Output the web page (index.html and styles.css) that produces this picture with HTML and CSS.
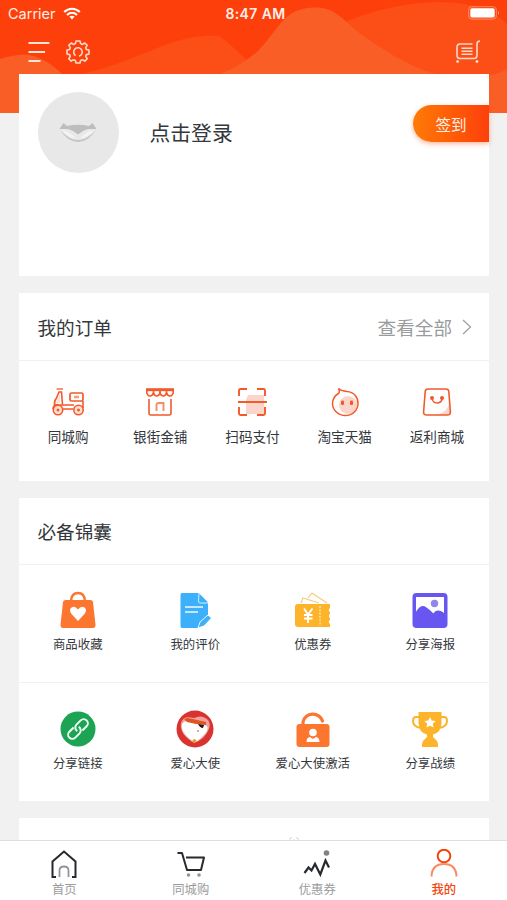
FILE: index.html
```html
<!DOCTYPE html>
<html lang="zh-CN">
<head>
<meta charset="utf-8">
<title>我的</title>
<link rel="stylesheet" href="styles.css">
</head>
<body>
<div class="app">
  <svg class="waves" viewBox="0 0 507 113" aria-hidden="true">
    <rect width="507" height="113" fill="#fd400b"/>
    <path d="M68 76C105 72 145 52 168 44C188 37 203 35 218 36C226 39 236 51 247 60L270 80H68Z" fill="#fc4f18"/>
    <path d="M340 24C385 5 425 0 456 3C484 6 499 15 507 25V80H340Z" fill="#fc4f18"/>
    <path d="M0 59C10 56 20 54 29 55C43 58 53 65 64 76V113H0Z" fill="#fa5e27"/>
    <path d="M222 73C238 67 247 60 257 52C271 38 277 25 288 16C299 7 319 5 332 11C343 17 350 26 362 35C383 50 408 66 435 74V80H222Z" fill="#fa5e27"/>
    <path d="M480 76C492 76 500 73 507 69V113H480Z" fill="#fa5e27"/>
  </svg>

  <header class="status">
    <div class="carrier"><span>Carrier</span>
      <svg width="18" height="13" viewBox="0 0 18 13"><g fill="none" stroke="#fff" stroke-width="2.1"><path d="M1.2 5.1C5.8.6 12.2.6 16.8 5.1"/><path d="M4 8C7 5.2 11 5.2 14 8"/></g><path d="M6.4 9.6Q9 7.7 11.6 9.6L9 12.4Z" fill="#fff"/></svg>
    </div>
    <b>8:47 AM</b>
    <svg class="battery" width="32" height="14" viewBox="0 0 32 14"><rect x=".7" y=".7" width="27.6" height="12.4" rx="3" fill="none" stroke="#ff8a66"/><rect x="2.3" y="2.3" width="24.4" height="9.2" rx="1.7" fill="#fff"/><path d="M30 5Q32 7 30 9Z" fill="#ffa080"/></svg>
  </header>

  <nav class="tools">
    <svg width="22" height="22" viewBox="0 0 22 22" stroke="#ffe5d8" stroke-width="2"><path d="M.5 2H21.500M.5 11H17M.5 20H12.500"/></svg>
    <svg width="24" height="24" viewBox="0 0 24 24" fill="none" stroke="#ffd9c8" stroke-width="1.6" stroke-linejoin="round"><path d="M10 1H14L14.600 3.600L16.500 4.400L18.800 3L21.200 5.300L19.700 7.700L20.400 9.500L23 10V14L20.400 14.600L19.700 16.400L21.200 18.700L18.800 21.100L16.500 19.700L14.600 20.500L14 23H10L9.400 20.500L7.500 19.700L5.200 21.100L2.800 18.700L4.300 16.400L3.600 14.600L1 14V10L3.600 9.500L4.300 7.700L2.800 5.300L5.200 3L7.500 4.400L9.400 3.600Z"/><path d="M9.600 15.600A4.300 4.300 0 1 1 13 16.200"/></svg>
    <svg class="cart" width="26" height="24" viewBox="0 0 26 24" fill="none" stroke="#ffd9c8" stroke-width="1.6"><path d="M25 1Q22 1.200 22 4V15Q22 18.500 19 18.500H5Q2 18.500 2 15V7.500Q2 4 5 4H17.500M6.500 8.200H17.500M6.500 11.200H17.500M6.500 14.200H17.500"/><circle cx="2.600" cy="21.500" r="1.100" fill="#ffe5d8" stroke-width=".8"/><circle cx="22" cy="21.500" r="1.100" fill="#ffe5d8" stroke-width=".8"/></svg>
  </nav>

  <main class="cards">
    <section class="card profile">
      <div class="avatar"><svg width="40" height="22" viewBox="0 0 40 22"><path d="M1.500 7L5.500 1L9 4Q20 1.500 31 4L34.500 1L38.500 7L30 7L25 9L20 12.500L15 9L10 7Z" fill="#bdbdbd"/><path d="M2 8Q10 20 20 20Q30 20 38 8Q29 18 20 18Q11 18 2 8Z" fill="#c4c4c4"/><path d="M4 8Q13 10 18 16.500Q9 15 4 8ZM36 8Q27 10 22 16.500Q31 15 36 8Z" fill="#f3f3f3"/></svg></div>
      <div class="login">点击登录</div>
      <div class="checkin">签到</div>
    </section>

    <section class="card">
      <div class="head"><h2>我的订单</h2><div class="more">查看全部<svg width="10" height="16" viewBox="0 0 10 16" fill="none" stroke="#a0a2a5" stroke-width="1.300"><path d="M1 1L8.500 8L1 15"/></svg></div></div>
      <div class="orders">
        <div class="item"><svg viewBox="0 0 32 30" width="32" height="30" fill="none" stroke="#f25a2b" stroke-width="1.600"><path d="M4.500 2H11" stroke-width="1.300"/><path d="M7 5H9.500L10.500 18H2.500Q2 14 4.500 11Z"/><path d="M3.500 16L8 7V16Z" fill="#fde0d4" stroke="none"/><rect x="18" y="6" width="13" height="8" rx="1.500" stroke-width="1.700"/><path d="M22 10H27" stroke="#f79d7d" stroke-width="2.600"/><path d="M31 14V21M11 18H22M11 22H21M1 22Q1 18 6 17.500"/><g fill="#fde0d4"><circle cx="6" cy="23" r="4.700"/><circle cx="26.500" cy="23" r="4.700"/></g><g fill="#f25a2b" stroke="none"><circle cx="6" cy="23" r="1.500"/><circle cx="26.500" cy="23" r="1.500"/></g></svg><span>同城购</span></div>
        <div class="item"><svg viewBox="0 0 32 30" width="32" height="30" fill="none" stroke="#f25a2b" stroke-width="1.600"><path d="M2.800 2H29.200V6Q28 9 26 9Q23.500 9 22.500 6Q21.500 9 19.300 9Q17 9 16 6Q15 9 12.700 9Q10.500 9 9.500 6Q8.500 9 6 9Q4 9 2.800 6Z"/><path d="M3 3H29" stroke-width="2.400"/><path d="M9.500 3V7M16 3V7M22.500 3V7"/><path d="M5 12V26Q5 28 7 28H25Q27 28 27 26V12"/><path d="M12.500 24V18Q12.500 16 14.500 16H19.500V24" stroke="#f58c69" stroke-width="1.900"/></svg><span>银街金铺</span></div>
        <div class="item"><svg viewBox="0 0 32 30" width="32" height="30" fill="none" stroke="#f25a2b" stroke-width="1.900"><path d="M12 8H28V27H10V13Z" fill="#fbd5c9" stroke="none"/><path d="M3 9V3.500Q3 2 4.500 2H11M21 2H27.500Q29 2 29 3.500V9M3 20V26.500Q3 28 4.500 28H11M21 28H27.500Q29 28 29 26.500V20M2 15H31"/></svg><span>扫码支付</span></div>
        <div class="item"><svg viewBox="0 0 32 30" width="32" height="30"><circle cx="19" cy="18" r="9" fill="#fbd5c9"/><path d="M9.500 1.500C11 3 14 4 18 4.500C25 5 29 10 29 16.500C29 23 23.500 28.500 16.500 28.500S3.500 23 3.500 16.500C3.500 12 6 8.500 10 6Q11 4 9.500 1.500Z" fill="none" stroke="#f25a2b" stroke-width="1.500"/><rect x="12" y="13.500" width="3" height="4.500" rx="1.300" fill="#f0562c"/><rect x="21" y="13.500" width="3" height="4.500" rx="1.300" fill="#f0562c"/></svg><span>淘宝天猫</span></div>
        <div class="item"><svg viewBox="0 0 32 30" width="32" height="30"><path d="M28 17Q26 25 16 28H26Q29 28 29 25Z" fill="#fbd5c9"/><path d="M7 2H25Q27.500 2 27.800 4.500L29.400 25Q29.500 28 26.500 28H5.500Q2.500 28 2.600 25L4.200 4.500Q4.500 2 7 2Z" fill="none" stroke="#f25a2b" stroke-width="1.600"/><path d="M11 11Q11.500 16 16 16T21.500 11" fill="none" stroke="#f25a2b" stroke-width="1.400"/><circle cx="11" cy="11" r="2" fill="#f0562c"/><circle cx="21" cy="11" r="2" fill="#f0562c"/></svg><span>返利商城</span></div>
      </div>
    </section>

    <section class="card">
      <div class="head kit-head"><h2>必备锦囊</h2></div>
      <div class="kit">
        <div class="item"><svg viewBox="0 0 38 38" width="38" height="38"><path d="M12 10Q12.500 2 19 2T26 10" fill="none" stroke="#fc7630" stroke-width="2.400"/><path d="M6.500 9H31.500Q33.500 9 34 11L36.500 34Q36.500 37 34 37H4Q1.500 37 1.500 34L4 11Q4.500 9 6.500 9Z" fill="#fc7630"/><path d="M19 30L12.500 23Q9.500 19 12.500 16.500Q16 14.500 19 18.500Q22 14.500 25.500 16.500Q28.500 19 25.500 23Z" fill="#fff"/></svg><span>商品收藏</span></div>
        <div class="item"><svg viewBox="0 0 38 38" width="38" height="38"><path d="M6 2H23L32 11V25L22 37H6Q4.500 37 4.500 35V4Q4.500 2 6 2Z" fill="#3cb0fb"/><path d="M23 2L32 11V12H24Q22.500 12 22.500 10Z" fill="#3cb0fb" stroke="#d5efff" stroke-width="1"/><path d="M9 16H27M9 21H22" stroke="#eef9ff" stroke-width="1.500"/><path d="M22 37L24 31L32 24L35.500 27L28 35Z" fill="#3cb0fb" stroke="#fff" stroke-width=".9"/></svg><span>我的评价</span></div>
        <div class="item"><svg viewBox="0 0 38 38" width="38" height="38"><g fill="none" stroke="#f9ca77" stroke-width="1.200"><path d="M7 12L9 7L25 12M14 7L18 2L33 12"/></g><path d="M4 13H36V17Q33.500 19 36 21V23Q33.500 25 36 27V29Q33.500 31 36 33V36H4Q1 36 1 33V16Q1 13 4 13Z" fill="#fdb32a"/><path d="M26 15V34" stroke="#ffe1a7" stroke-width="1.500" stroke-dasharray="2 1.300"/><path d="M10 17.500L14 23.500L18.500 17.500M14 23.500V32M10 24H18.500M10 27.500H18.500" fill="none" stroke="#fff" stroke-width="1.900"/></svg><span>优惠券</span></div>
        <div class="item"><svg viewBox="0 0 38 38" width="38" height="38"><rect x="1.500" y="2" width="35" height="35" rx="4" fill="#6756f0"/><path d="M5 6H33V22Q27 17 23 23Q17 17 13 15Q9 15 5 21Z" fill="#fff"/><path d="M5 21Q10 12 15 17Q20 23 22 23Q26 16 33 23V28H5Z" fill="#6756f0"/><circle cx="23.500" cy="12.500" r="3.700" fill="#9185ee"/></svg><span>分享海报</span></div>
        <div class="item"><svg viewBox="0 0 38 38" width="38" height="38"><circle cx="19" cy="19" r="17.500" fill="#1da354"/><g fill="none" stroke="#ecfff2" stroke-width="2" transform="rotate(-45 19 19)"><path d="M17 14.800H11A4.200 4.200 0 0 0 11 23.200H17A4.200 4.200 0 0 0 21 18"/><path d="M21 23.200H27A4.200 4.200 0 0 0 27 14.800H21A4.200 4.200 0 0 0 17 20"/></g></svg><span>分享链接</span></div>
        <div class="item"><svg viewBox="0 0 38 38" width="38" height="38"><circle cx="19" cy="19" r="18.500" fill="#d93330"/><path d="M18 33Q3 24 5 13Q7 5 18 8Q26 4 32 10Q37 17 27 28Q22 32 18 33Z" fill="#f1a09b"/><path d="M18 32Q4 23 6 14Q10 8 20 12L31 16Q34 20 25 28Q22 31 18 32Z" fill="#fff"/><path d="M8 9L12 8L30 12V15L20 14L11 12Z" fill="#df5420"/><path d="M22 14L28 15L27 18Q24 18 22 14Z" fill="#28110e"/><path d="M18 29L20.500 30L19 33L16 31Z" fill="#ef9629"/><circle cx="22" cy="21" r="1" fill="#e9837f"/></svg><span>爱心大使</span></div>
        <div class="item"><svg viewBox="0 0 38 38" width="38" height="38"><path d="M9 15V12A10 9.500 0 0 1 28.500 11" fill="none" stroke="#fc7630" stroke-width="3.200" stroke-linecap="round"/><rect x="2.500" y="14" width="33" height="23" rx="3" fill="#fc7630"/><circle cx="19" cy="22.500" r="3.800" fill="#fff"/><path d="M12.500 32Q12.500 27.500 16 27L19 29L22 27Q25.500 27.500 25.500 32Z" fill="#fff"/></svg><span>爱心大使激活</span></div>
        <div class="item"><svg viewBox="0 0 38 38" width="38" height="38"><g fill="none" stroke="#fdb32a" stroke-width="2"><path d="M9 7H5Q2 7 2 11Q2 17 10 18M29 7H33Q36 7 36 11Q36 17 28 18"/></g><path d="M7.500 2H30.500V13Q30 23 22 24.500V27L26 31L27 34V37H11V34L12 31L16 27V24.500Q8 23 7.500 13Z" fill="#fdb32a"/><path d="M19 7L20.700 10.500L24.600 11L21.800 13.700L22.500 17.600L19 15.700L15.500 17.600L16.200 13.700L13.400 11L17.300 10.500Z" fill="#fff"/></svg><span>分享战绩</span></div>
      </div>
    </section>

    <section class="card next"><svg width="11" height="4" viewBox="0 0 11 4"><path d="M1 4V1H3M5 4V2M9 4V1H7" fill="none" stroke="#d9d9d9"/></svg></section>
  </main>

  <footer class="tabs">
    <div class="tab"><svg viewBox="0 0 30 30" width="30" height="30" fill="none" stroke="#26292d" stroke-width="2"><path d="M7 28H3.500V12.500L15 2.500L26.500 12.500V28H23"/><path d="M10.500 28V21.500Q10.500 17.500 15 17.500T19.500 21.500V28" stroke="#929497" stroke-width="1.800"/></svg><span>首页</span></div>
    <div class="tab"><svg viewBox="0 0 30 30" width="30" height="30" fill="none" stroke="#26292d" stroke-width="2"><path d="M1.500 4H6L11 21H25L28 8.500H10" stroke-linejoin="round"/><g fill="#929497" stroke="none"><circle cx="12.500" cy="26" r="1.800"/><circle cx="23" cy="26" r="1.800"/></g></svg><span>同城购</span></div>
    <div class="tab"><svg viewBox="0 0 30 30" width="30" height="30"><path d="M2.500 24L6.500 18.500L9.500 21.500L13 15L18.300 25.500L23.500 11.500L27 18.500" fill="none" stroke="#26292d" stroke-width="2.200"/><circle cx="24.500" cy="4" r="2.800" fill="#808286"/></svg><span>优惠券</span></div>
    <div class="tab active"><svg viewBox="0 0 30 30" width="30" height="30" fill="none"><circle cx="15" cy="7" r="6.300" stroke="#f5450d" stroke-width="2"/><path d="M2.500 27.500Q3 15 15 15T27.500 27.500" stroke="#fb8a61" stroke-width="2"/></svg><span>我的</span></div>
  </footer>
</div>
</body>
</html>
```
FILE: styles.css
```css
* { box-sizing: border-box; }
body { margin: 0; font-family: "Noto Sans CJK SC", sans-serif; color: #34373b; }
svg { display: block; flex: none; }
.app { position: relative; width: 507px; height: 900px; overflow: hidden; background: #f1f1f1; display: flex; flex-direction: column; }
.waves { position: absolute; top: 0; left: 0; width: 507px; height: 113px; }
.status, .tools, .cards, .tabs { position: relative; flex: none; }
.status { height: 28px; display: grid; grid-template-columns: 1fr auto 1fr; align-items: center; padding: 0 7px 0 8px; color: #ffeee8; font: 14.5px/20px Inter, sans-serif; }
.status b { margin-left: 3px; font-size: 14px; font-weight: 600; letter-spacing: .4px; }
.carrier { display: flex; align-items: center; gap: 7px; }
.carrier svg { margin-bottom: 2px; }
.battery { justify-self: end; margin-bottom: 2px; }
.tools { height: 46px; display: flex; align-items: center; gap: 16px; padding: 2px 26px 0 28px; }
.tools .cart { margin-left: auto; }
.cards { flex: 1; min-height: 0; overflow: hidden; padding: 0 18px 0 19px; display: flex; flex-direction: column; gap: 17px; }
.card { flex: none; background: #fff; }
.profile { height: 202px; display: flex; align-items: flex-start; padding: 18px 0 0 18.5px; }
.avatar { width: 81px; height: 81px; border-radius: 50%; background: #e8e8e8; display: flex; align-items: center; justify-content: center; }
.login { margin-left: 31px; font-size: 20.8px; line-height: 81px; }
.checkin { margin: 13px 0 0 auto; width: 76px; height: 37px; border-radius: 19px 0 0 19px; background: linear-gradient(90deg, #ff7a06, #fd400b); box-shadow: 0 2px 5px #fd500b66; color: #fff0e5; font-size: 15.600px; line-height: 38px; text-align: center; }
.head { height: 68px; border-bottom: 1px solid #f1f1f1; display: flex; align-items: center; justify-content: space-between; padding: 0 17px 0 18.500px; }
.kit-head { height: 67px; padding-bottom: 1px; }
h2 { margin: 0; font-size: 18.600px; line-height: 28px; font-weight: 400; }
.more { display: flex; align-items: center; gap: 10px; font-size: 18.600px; line-height: 28px; color: #999b9e; }
.orders { display: grid; grid-template-columns: repeat(5, 1fr); height: 120px; padding: 26px 6px 0 3px; }
.item { display: flex; flex-direction: column; align-items: center; white-space: nowrap; }
.orders .item { gap: 9px; font-size: 13.600px; line-height: 20px; }
.kit { display: grid; grid-template-columns: repeat(4, 1fr); grid-template-rows: 118px 118px; }
.kit .item { padding-top: 26px; gap: 6px; font-size: 12.400px; line-height: 18px; }
.kit .item:nth-child(-n+4) { box-shadow: inset 0 -1px #f1f1f1; }
.kit .item:nth-child(n+5) { padding-top: 27px; }
.next { height: 80px; padding: 19px 0 0 270px; }
.tabs { height: 60px; background: #fff; border-top: 1px solid #dedede; display: grid; grid-template-columns: repeat(4, 1fr); padding-left: 1px; }
.tab { display: flex; flex-direction: column; align-items: center; padding-top: 8px; gap: 1px; font-size: 12.300px; line-height: 18px; color: #999b9d; }
.tab.active { color: #f5450d; font-weight: 500; }
```
